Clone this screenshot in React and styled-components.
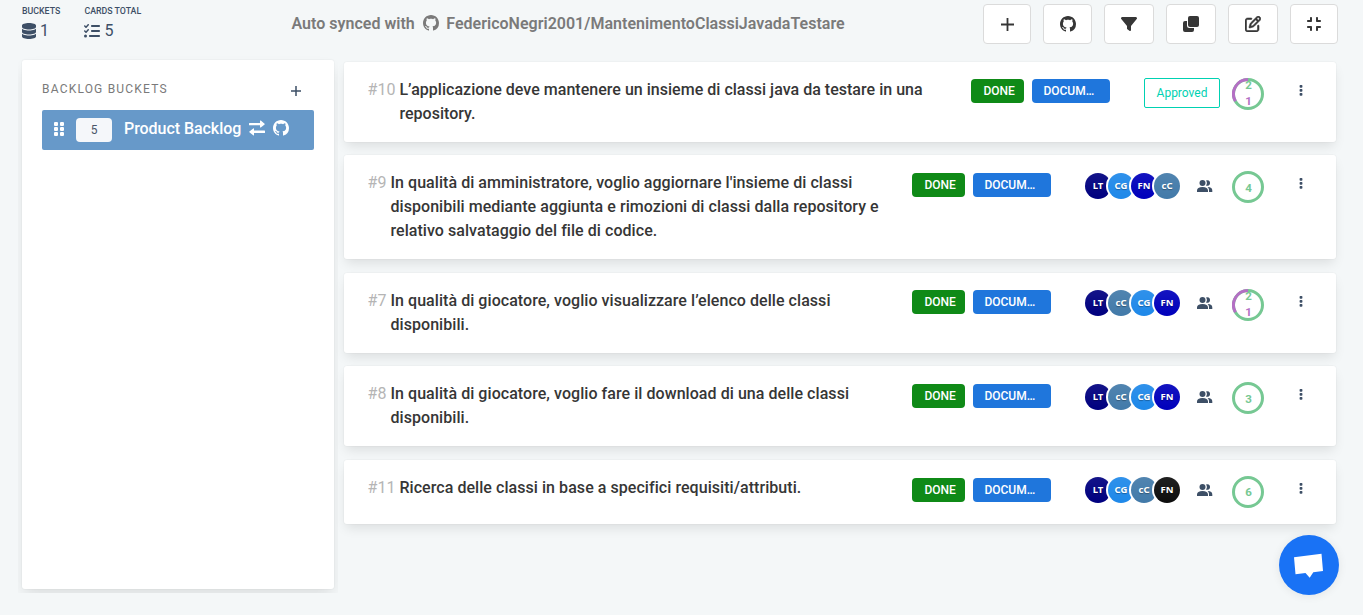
import React from "react";
import styled, { createGlobalStyle } from "styled-components";
import { FaDatabase, FaListCheck, FaGripVertical, FaFilter, FaRegPenToSquare, FaCompress } from "react-icons/fa6";

const GlobalStyle = createGlobalStyle`
  *, *::before, *::after { box-sizing: border-box; }
  body { margin: 0; background: #f4f7f8; overflow: hidden; font-family: Roboto, "Liberation Sans", sans-serif; color: #363636; }
  svg { display: block; flex: none; }
`;

const Page = styled.div`
  height: 615px;
  display: flex;
  flex-direction: column;
`;
const Header = styled.header`
  height: 60px;
  flex: none;
  display: flex;
  align-items: flex-start;
  padding: 4px 25px 0 22px;
`;
const Stat = styled.div`
  width: ${(p) => p.$width}px;
  color: #3d4f66;
`;
const StatLabel = styled.div`
  font-size: 8.8px;
  line-height: 12px;
  font-weight: 500;
  white-space: nowrap;
  padding-top: 1px;
`;
const StatValue = styled.div`
  display: flex;
  align-items: center;
  gap: 4px;
  margin-top: 4px;
  font-size: 16px;
  font-weight: 400;
  line-height: 19px;
`;
const DatabaseIcon = styled(FaDatabase)`
  width: 14px;
  height: 16px;
`;
const SyncTitle = styled.div`
  display: flex;
  align-items: center;
  padding-top: 8px;
  font-size: 16px;
  line-height: 24px;
  font-weight: 600;
  letter-spacing: 0.02px;
  color: #7a7a7a;
  white-space: pre;
  svg { margin: 0 7.5px 3px 8px; }
`;
const Toolbar = styled.div`
  display: flex;
  gap: 12px;
  margin-left: auto;
`;
const ToolButton = styled.button`
  width: ${(p) => p.$width}px;
  height: 40px;
  padding: 0;
  display: flex;
  align-items: center;
  justify-content: center;
  border: 1px solid #dbdbdb;
  border-radius: 4px;
  background: #fff;
  color: #363636;
`;
const Body = styled.div`
  display: flex;
  gap: 10px;
  padding: 0 27px 0 22px;
  flex: 1;
`;
const Sidebar = styled.aside`
  width: 312px;
  height: 529px;
  flex: none;
  padding: 20px;
  background: #fff;
  border-radius: 3px;
  box-shadow: 0 8px 16px -2px rgba(10,10,10,0.1), 0 0 0 1px rgba(10,10,10,0.02);
  clip-path: inset(-4px);
`;
const SidebarHead = styled.div`
  height: 30px;
  display: flex;
  align-items: flex-start;
  justify-content: space-between;
  padding-right: 13px;
  font-size: 12px;
  line-height: 18px;
  letter-spacing: 1.2px;
  color: #7a7a7a;
  svg { margin-top: 6px; color: #3d4f66; }
`;
const Bucket = styled.div`
  height: 40px;
  display: flex;
  align-items: center;
  padding-left: 9px;
  border-radius: 2px;
  background: #6799c9;
  color: #fff;
  > svg { margin-bottom: 3px; }
`;
const BucketCount = styled.span`
  width: 36px;
  height: 24px;
  margin: 0 12px 0 9px;
  border-radius: 4px;
  background: #f5f7fa;
  color: #4a5568;
  font-size: 12px;
  line-height: 24px;
  text-align: center;
`;
const BucketName = styled.span`
  width: 117px;
  font-size: 16px;
  line-height: 20px;
  font-weight: 500;
  letter-spacing: -0.05px;
  white-space: nowrap;
  margin-right: 8px;
  padding-bottom: 3px;
`;
const BucketIcons = styled.div`
  display: flex;
  gap: 8px;
  padding-bottom: 4px;
`;
const CardList = styled.main`
  flex: 1;
  padding-top: 1.9px;
  display: flex;
  flex-direction: column;
  gap: 13.5px;
`;
const Card = styled.article`
  height: ${(p) => p.$height}px;
  display: flex;
  align-items: flex-start;
  padding-left: 23.6px;
  background: #fff;
  border-radius: 3px;
  box-shadow: 0 6px 12px -2px rgba(10,10,10,0.1), 0 0 0 1px rgba(10,10,10,0.02);
`;
const CardId = styled.span`
  padding-top: 15.8px;
  margin-right: 4px;
  font-size: 16px;
  line-height: 24px;
  color: #b5b5b5;
`;
const CardTitle = styled.div`
  padding-top: 15.8px;
  font-size: 16px;
  line-height: 24px;
  font-weight: 500;
  letter-spacing: ${(p) => p.$tracking}px;
  white-space: pre-line;
`;
const Tags = styled.div`
  display: flex;
  gap: 8px;
  margin-left: auto;
  padding-top: ${(p) => (p.$single ? 18 : 17.2)}px;
`;
const Tag = styled.span`
  width: ${(p) => p.$width}px;
  height: 24px;
  padding-left: ${(p) => p.$inset}px;
  border-radius: 4px;
  background: ${(p) => p.$color};
  color: #fff;
  font-size: 12px;
  line-height: 24px;
  font-weight: 500;
`;
const Approved = styled.span`
  width: 76px;
  height: 30px;
  margin: 16px 0 0 34px;
  border: 1px solid #00d1b2;
  border-radius: 2px;
  color: #00d1b2;
  font-size: 12px;
  line-height: 28px;
  text-align: center;
`;
const People = styled.div`
  width: 135px;
  margin-left: 34px;
  padding-top: 17.2px;
  display: flex;
  align-items: center;
  color: #3d4f66;
  > svg { margin-left: 20px; }
`;
const Avatar = styled.span`
  width: 26px;
  height: 26px;
  margin-right: -3px;
  border-radius: 50%;
  background: linear-gradient(rgba(255,255,255,0.08), rgba(255,255,255,0)) ${(p) => p.$color};
  box-shadow: -1px 0 0 1px #fff;
  color: #fff;
  font-family: "Noto Sans", sans-serif;
  font-size: 9.5px;
  font-weight: 700;
  line-height: 26px;
  text-align: center;
  text-shadow: 0 1px 1px rgba(0,0,0,0.3);
`;
const Ring = styled.div`
  width: 32px;
  height: 32px;
  margin: 16px 0 0 12px;
  display: grid;
  > * { grid-area: 1 / 1; }
`;
const RingText = styled.div`
  height: 32px;
  display: flex;
  flex-direction: column;
  align-items: center;
  justify-content: center;
  font-size: 11.5px;
  line-height: 16px;
  font-weight: 700;
  color: #76c893;
  padding: ${(p) => (p.$split ? 0 : 1)}px 0 0 1px;
  margin-top: ${(p) => (p.$split ? -0.8 : 0)}px;
`;
const Pending = styled.span`
  color: #b46fc4;
`;
const More = styled.div`
  margin: 23.1px 33.4px 0 34.6px;
  color: #3d4f66;
`;
const Chat = styled.button`
  position: fixed;
  left: 1279px;
  top: 535px;
  width: 60px;
  height: 60px;
  padding: 0;
  border: 0;
  border-radius: 50%;
  background: #1972f5;
  box-shadow: 0 1px 10px rgba(0,0,0,0.08);
`;

const GithubIcon = () => (
  <svg width="16" height="16" viewBox="0 0 16 16" fill="currentColor">
    <path d="M8 0C3.580 0 0 3.580 0 8c0 3.540 2.290 6.530 5.470 7.590.4.070.550-.170.550-.380 0-.190-.010-.820-.010-1.490-2.010.370-2.530-.490-2.690-.940-.090-.230-.480-.940-.820-1.130-.280-.150-.680-.520-.010-.530.630-.010 1.080.580 1.230.820.720 1.210 1.870.870 2.330.660.070-.520.280-.870.510-1.070-1.780-.2-3.640-.890-3.640-3.950 0-.870.310-1.590.820-2.150-.080-.2-.360-1.020.080-2.120 0 0 .670-.210 2.200.820.640-.180 1.320-.270 2-.270s1.360.090 2 .270c1.530-1.040 2.200-.820 2.200-.820.440 1.100.160 1.920.080 2.120.510.560.820 1.270.820 2.150 0 3.070-1.870 3.750-3.650 3.950.290.250.540.730.540 1.480 0 1.070-.010 1.930-.010 2.200 0 .210.150.460.550.380A8.013 8.013 0 0 0 16 8c0-4.420-3.580-8-8-8z" />
  </svg>
);
const Plus = ({ size, stroke }) => (
  <svg width={size} height={size} viewBox={`0 0 ${size} ${size}`} stroke="currentColor" strokeWidth={stroke}>
    <path d={`M0 ${size / 2}H${size}M${size / 2} 0V${size}`} />
  </svg>
);
const SwapIcon = () => (
  <svg width="16" height="16" viewBox="0 0 16 16" fill="currentColor">
    <path d="M.5 3H11V1Q11 .2 11.800.6L15.600 3.700Q16 4 15.600 4.400L11.800 7.500Q11 7.900 11 7V5.200H.5Q0 5.200 0 4.700V3.500Q0 3 .5 3zM15.500 10.600H5V8.800Q5 8 4.200 8.400L.4 11.400Q0 11.800.4 12.200L4.200 15.300Q5 15.700 5 14.900V12.900H15.500Q16 12.900 16 12.400V11.100Q16 10.600 15.500 10.600z" />
  </svg>
);
const CloneIcon = () => (
  <svg width="16" height="16" viewBox="0 0 16 16" fill="currentColor">
    <rect x="5" y="0" width="11" height="11" rx="2" />
    <path d="M4 5H2a2 2 0 0 0-2 2v7a2 2 0 0 0 2 2h7a2 2 0 0 0 2-2v-2H6.500A2.500 2.500 0 0 1 4 9.500z" />
  </svg>
);
const PeopleIcon = () => (
  <svg width="16" height="14" viewBox="0 0 16 14" fill="currentColor">
    <circle cx="5.500" cy="4" r="3" />
    <path d="M9 1.500a2.800 2.800 0 1 1 0 5A4.200 4.200 0 0 0 9 1.500zM0 13v-1.500C0 9.200 2 8 5.500 8s5.500 1.200 5.500 3.500v1.500zM12 13v-1.500c0-1.500-.5-2.600-1.400-3.400C14 8.200 15.300 9.400 15.300 11.500v1.500z" />
  </svg>
);
const Dots = () => (
  <svg width="4" height="11" viewBox="0 0 4 11" fill="currentColor">
    <rect x=".6" y="0" width="2.800" height="2.800" rx=".8" />
    <rect x=".6" y="4" width="2.800" height="2.800" rx=".8" />
    <rect x=".6" y="8" width="2.800" height="2.800" rx=".8" />
  </svg>
);

const colors = { LT: "#00007f", CG: "#1e88e9", FN: "#0000bb", cC: "#427aa9", FNb: "#0d0d0d" };

const cards = [
  { id: 10, height: 80, tracking: 0.02, title: "L’applicazione deve mantenere un insieme di classi java da testare in una\nrepository.", approved: true, done: 2, pending: 1 },
  { id: 9, height: 104, title: "In qualità di amministratore, voglio aggiornare l'insieme di classi\ndisponibili mediante aggiunta e rimozioni di classi dalla repository e\nrelativo salvataggio del file di codice.", people: ["LT", "CG", "FN", "cC"], done: 4 },
  { id: 7, height: 80, title: "In qualità di giocatore, voglio visualizzare l’elenco delle classi\ndisponibili.", people: ["LT", "cC", "CG", "FN"], done: 2, pending: 1 },
  { id: 8, height: 80, title: "In qualità di giocatore, voglio fare il download di una delle classi\ndisponibili.", people: ["LT", "cC", "CG", "FN"], done: 3 },
  { id: 11, height: 64, title: "Ricerca delle classi in base a specifici requisiti/attributi.", people: ["LT", "CG", "cC", "FNb"], done: 6 },
];

function Progress({ done, pending }) {
  return (
    <Ring>
      <svg width="32" height="32" viewBox="0 0 32 32" fill="none">
        <circle cx="16" cy="16" r="14.500" stroke="#76c893" strokeWidth="3" />
        {pending && <path d="M16 1.500A14.500 14.500 0 0 0 3.440 23.250" stroke="#b46fc4" strokeWidth="3" />}
      </svg>
      <RingText $split={Boolean(pending)}>
        <span>{done}</span>
        {pending && <Pending>{pending}</Pending>}
      </RingText>
    </Ring>
  );
}

function BacklogCard({ card }) {
  return (
    <Card $height={card.height}>
      <CardId>#{card.id}</CardId>
      <CardTitle $tracking={card.tracking ?? 0.055}>{card.title}</CardTitle>
      <Tags $single={card.height === 64}>
        <Tag $width={53} $inset={12.4} $color="#0f8a17">DONE</Tag>
        <Tag $width={78} $inset={11.4} $color="#1f76dc">DOCUM…</Tag>
      </Tags>
      {card.approved ? (
        <Approved>Approved</Approved>
      ) : (
        <People>
          {card.people.map((p) => (
            <Avatar key={p} $color={colors[p]}>{p.slice(0, 2)}</Avatar>
          ))}
          <PeopleIcon />
        </People>
      )}
      <Progress done={card.done} pending={card.pending} />
      <More><Dots /></More>
    </Card>
  );
}

export default function App() {
  return (
    <Page>
      <GlobalStyle />
      <Header>
        <Stat $width={62.4}>
          <StatLabel>BUCKETS</StatLabel>
          <StatValue><DatabaseIcon />1</StatValue>
        </Stat>
        <Stat $width={207}>
          <StatLabel>CARDS TOTAL</StatLabel>
          <StatValue><FaListCheck size={16} />5</StatValue>
        </Stat>
        <SyncTitle>
          Auto synced with<GithubIcon />FedericoNegri2001/MantenimentoClassiJavadaTestare
        </SyncTitle>
        <Toolbar>
          <ToolButton $width={48}><Plus size={13} stroke={1.8} /></ToolButton>
          <ToolButton $width={49}><GithubIcon /></ToolButton>
          <ToolButton $width={50}><FaFilter size={16} /></ToolButton>
          <ToolButton $width={50}><CloneIcon /></ToolButton>
          <ToolButton $width={50}><FaRegPenToSquare size={16} stroke="currentColor" strokeWidth="18" /></ToolButton>
          <ToolButton $width={48}><FaCompress size={16} /></ToolButton>
        </Toolbar>
      </Header>
      <Body>
        <Sidebar>
          <SidebarHead>
            BACKLOG BUCKETS
            <Plus size={10} stroke={1.5} />
          </SidebarHead>
          <Bucket>
            <FaGripVertical size={16} />
            <BucketCount>5</BucketCount>
            <BucketName>Product Backlog</BucketName>
            <BucketIcons><SwapIcon /><GithubIcon /></BucketIcons>
          </Bucket>
        </Sidebar>
        <CardList>
          {cards.map((c) => <BacklogCard key={c.id} card={c} />)}
        </CardList>
      </Body>
      <Chat>
        <svg width="60" height="60" viewBox="0 0 60 60" fill="#fff">
          <path d="M15 22.200L42.500 18.800L44 36L34.300 37.200L30.700 42.700L26.500 38L16.500 39.200Z" />
        </svg>
      </Chat>
    </Page>
  );
}
